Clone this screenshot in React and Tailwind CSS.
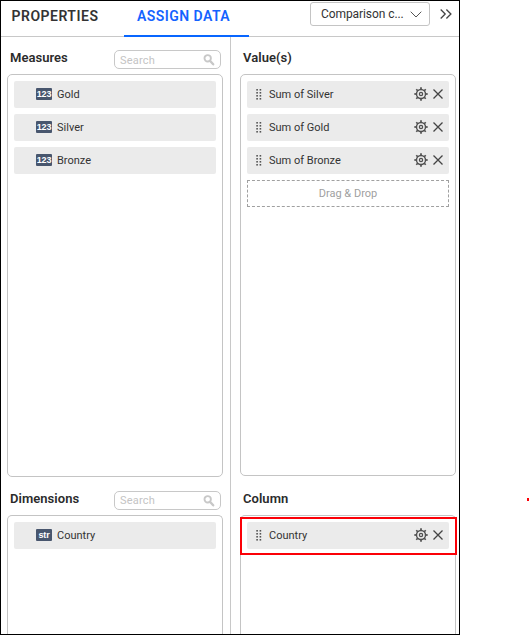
import React from 'react';

function SearchBox({ labelClass = '' }) {
  return (
    <div className="flex h-[19px] w-[107px] items-center justify-between rounded-[5px] border border-[#c8c8c8] pr-[5px] pl-[5px]">
      <span className={`text-[11px] leading-[17px] tracking-[0.2px] text-[#c4c4c4] ${labelClass}`}>Search</span>
      <svg className="mt-px" width="12" height="12" viewBox="0 0 12 12" fill="none" stroke="#c8c8c8">
        <circle cx="4.7" cy="4.3" r="3.2" strokeWidth="1.9" />
        <path d="M7.2 7 L10.2 10.3" strokeWidth="2.4" strokeLinecap="round" />
      </svg>
    </div>
  );
}

function TypeBadge({ type }) {
  return (
    <span className="mb-px flex h-3 w-4 items-center justify-center rounded-[1px] bg-[#48566e] font-['Liberation_Sans',sans-serif] text-[9px] leading-3 font-bold tracking-[-0.1px] text-white">
      {type}
    </span>
  );
}

function Field({ type, name }) {
  return (
    <div className="flex h-[27px] items-center gap-[5px] rounded-[2px] bg-[#ebebeb] pl-[22px]">
      <TypeBadge type={type} />
      <span className="pt-px text-[11px] leading-4 text-[#333]">{name}</span>
    </div>
  );
}

const dotRows = [0, 3, 6, 9];

function Grip() {
  return (
    <svg width="6" height="11" viewBox="0 0 6 11" fill="#555">
      {dotRows.map((y) => (
        <g key={y}>
          <rect x="0.3" y={y} width="1.6" height="1.6" />
          <rect x="3.6" y={y} width="1.6" height="1.6" />
        </g>
      ))}
    </svg>
  );
}

const teeth = [0, 45, 90, 135, 180, 225, 270, 315];

function Gear() {
  return (
    <svg className="mb-px" width="14" height="14" viewBox="0 0 14 14" fill="none" stroke="#505050">
      <circle cx="7" cy="7" r="4.5" strokeWidth="1.4" />
      <circle cx="7" cy="7" r="1.6" strokeWidth="1.3" />
      {teeth.map((a) => (
        <path key={a} d="M7 0.3 V2.4" strokeWidth="1.7" transform={`rotate(${a} 7 7)`} />
      ))}
    </svg>
  );
}

function Assigned({ name }) {
  return (
    <div className="flex h-[27px] items-center rounded-[2px] bg-[#ebebeb] pr-[6px] pl-[9px]">
      <Grip />
      <span className="ml-[7px] flex-1 pt-px text-[11px] leading-4 text-[#333]">{name}</span>
      <Gear />
      <svg className="mb-[2px] ml-[5px]" width="10" height="10" viewBox="0 0 10 10" stroke="#444" strokeWidth="1.3">
        <path d="M0.5 0.5 L9.5 9.5 M9.5 0.5 L0.5 9.5" />
      </svg>
    </div>
  );
}

function Heading({ children }) {
  return <h2 className="text-[13px] leading-4 font-semibold tracking-[0.04px] text-[#2b2b2b]">{children}</h2>;
}

export default function App() {
  return (
    <div className="relative h-[635px] w-[529px] overflow-hidden bg-white font-[Roboto,sans-serif]">
      <div className="flex h-[635px] w-[460px] flex-col overflow-hidden border border-black">
        <header className="flex h-9 shrink-0 border-b border-[#c8c8c8]">
          <div className="w-[123px] pt-[7px] pl-[10.5px] text-[14px] leading-4 font-semibold tracking-[0.5px] text-[#333]">PROPERTIES</div>
          <div className="h-9 w-[125px] border-b-2 border-[#0866ff] pt-[7px] pl-[13px] text-[14px] leading-4 font-semibold tracking-[0.45px] whitespace-nowrap text-[#1463ff]">
            ASSIGN DATA
          </div>
          <div className="mt-px ml-[61px] flex h-6 w-[120px] items-center justify-between rounded-[3px] border border-[#c4c4c4] pr-[7px] pl-[10px]">
            <span className="text-[12px] tracking-[-0.08px] whitespace-nowrap text-[#333]">Comparison c...</span>
            <svg width="12" height="7" viewBox="0 0 12 7" fill="none" stroke="#555">
              <path d="M0.7 0.7 L6 6 L11.3 0.7" />
            </svg>
          </div>
          <svg className="mt-2 ml-[10px]" width="12" height="10" viewBox="0 0 12 10" fill="none" stroke="#444" strokeWidth="1.3">
            <path d="M0.7 0.5 L5.2 5 L0.7 9.5 M6.4 0.5 L10.9 5 L6.4 9.5" />
          </svg>
        </header>
        <div className="flex min-h-0 flex-1">
          <section className="flex w-[230px] flex-col border-r border-[#c8c8c8] pl-[6px]">
            <div className="flex h-[37px] shrink-0 items-start justify-between pt-[13px] pr-[9px] pl-[3px]">
              <Heading>Measures</Heading>
              <SearchBox labelClass="pt-px" />
            </div>
            <div className="flex h-[403px] w-[216px] shrink-0 flex-col gap-[6px] rounded-[5px] border border-[#c4c4c4] p-[6px]">
              <Field type="123" name="Gold" />
              <Field type="123" name="Silver" />
              <Field type="123" name="Bronze" />
            </div>
            <div className="flex h-[38px] shrink-0 items-start justify-between pt-[14px] pr-[9px] pl-[3px]">
              <Heading>Dimensions</Heading>
              <SearchBox />
            </div>
            <div className="w-[216px] flex-1 rounded-t-[5px] border border-b-0 border-[#c4c4c4] p-[6px]">
              <Field type="str" name="Country" />
            </div>
          </section>
          <section className="flex flex-1 flex-col pl-[9px]">
            <div className="h-[37px] shrink-0 pt-[13px] pl-[3px]">
              <Heading>Value(s)</Heading>
            </div>
            <div className="flex h-[402px] w-[216px] shrink-0 flex-col gap-[6px] rounded-[5px] border border-[#c4c4c4] p-[6px]">
              <Assigned name="Sum of Silver" />
              <Assigned name="Sum of Gold" />
              <Assigned name="Sum of Bronze" />
              <div className="flex h-[27px] items-start justify-center border border-dashed border-[#a0a0a0] pt-[5px] text-[11px] leading-4 text-[#9f9f9f]">
                Drag &amp; Drop
              </div>
            </div>
            <div className="h-[39px] shrink-0 pt-[15px] pl-[3px]">
              <Heading>Column</Heading>
            </div>
            <div className="relative w-[216px] flex-1 rounded-t-[5px] border border-b-0 border-[#c4c4c4] p-[6px]">
              <Assigned name="Country" />
              <div className="absolute top-px -left-px h-[38px] w-[217px] border-2 border-[#fb0007]" />
            </div>
          </section>
        </div>
      </div>
      <div className="absolute top-[498px] left-[527px] h-[3px] w-[2px] bg-[#fb0007]" />
    </div>
  );
}
